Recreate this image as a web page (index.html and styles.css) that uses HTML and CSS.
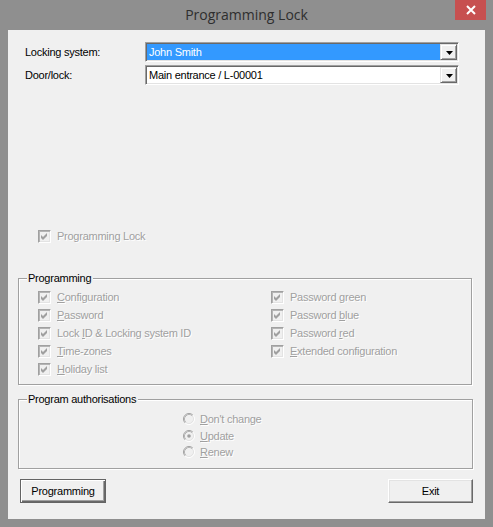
FILE: index.html
```html
<!DOCTYPE html>
<html>
<head>
<meta charset="utf-8">
<link rel="stylesheet" href="styles.css">
</head>
<body>
<div class="window">
  <div class="titlebar">
    <span class="title">Programming Lock</span>
    <div class="close"><svg width="10" height="10" viewBox="0 0 10 10"><path d="M1 1L9 9M9 1L1 9" stroke="#fff" stroke-width="2"/></svg></div>
  </div>
  <div class="client">
    <div class="formrow">
      <span class="lbl">Locking system:</span>
      <div class="combo">
        <div class="field sel">John Smith</div>
        <div class="drop"><svg width="7" height="4" viewBox="0 0 7 4"><path d="M0 0H7L3.5 4Z" fill="#000"/></svg></div>
      </div>
    </div>
    <div class="formrow">
      <span class="lbl">Door/lock:</span>
      <div class="combo">
        <div class="field">Main entrance / L-00001</div>
        <div class="drop"><svg width="7" height="4" viewBox="0 0 7 4"><path d="M0 0H7L3.5 4Z" fill="#000"/></svg></div>
      </div>
    </div>

    <div class="check solo">
      <span class="cb"><svg width="11" height="11" viewBox="0 0 11 11"><polygon points="2,4 4,6 8,2 8,5 4,9 2,7" fill="#a0a0a0"/></svg></span>
      <span class="dis">Programming Lock</span>
    </div>

    <fieldset class="group g1">
      <legend>Programming</legend>
      <div class="grid">
        <div class="check"><span class="cb"><svg width="11" height="11" viewBox="0 0 11 11"><polygon points="2,4 4,6 8,2 8,5 4,9 2,7" fill="#a0a0a0"/></svg></span><span class="dis"><u>C</u>onfiguration</span></div>
        <div class="check"><span class="cb"><svg width="11" height="11" viewBox="0 0 11 11"><polygon points="2,4 4,6 8,2 8,5 4,9 2,7" fill="#a0a0a0"/></svg></span><span class="dis">Password <u>g</u>reen</span></div>
        <div class="check"><span class="cb"><svg width="11" height="11" viewBox="0 0 11 11"><polygon points="2,4 4,6 8,2 8,5 4,9 2,7" fill="#a0a0a0"/></svg></span><span class="dis"><u>P</u>assword</span></div>
        <div class="check"><span class="cb"><svg width="11" height="11" viewBox="0 0 11 11"><polygon points="2,4 4,6 8,2 8,5 4,9 2,7" fill="#a0a0a0"/></svg></span><span class="dis">Password <u>b</u>lue</span></div>
        <div class="check"><span class="cb"><svg width="11" height="11" viewBox="0 0 11 11"><polygon points="2,4 4,6 8,2 8,5 4,9 2,7" fill="#a0a0a0"/></svg></span><span class="dis">Lock <u>I</u>D &amp; Locking system ID</span></div>
        <div class="check"><span class="cb"><svg width="11" height="11" viewBox="0 0 11 11"><polygon points="2,4 4,6 8,2 8,5 4,9 2,7" fill="#a0a0a0"/></svg></span><span class="dis">Password <u>r</u>ed</span></div>
        <div class="check"><span class="cb"><svg width="11" height="11" viewBox="0 0 11 11"><polygon points="2,4 4,6 8,2 8,5 4,9 2,7" fill="#a0a0a0"/></svg></span><span class="dis"><u>T</u>ime-zones</span></div>
        <div class="check"><span class="cb"><svg width="11" height="11" viewBox="0 0 11 11"><polygon points="2,4 4,6 8,2 8,5 4,9 2,7" fill="#a0a0a0"/></svg></span><span class="dis"><u>E</u>xtended configuration</span></div>
        <div class="check"><span class="cb"><svg width="11" height="11" viewBox="0 0 11 11"><polygon points="2,4 4,6 8,2 8,5 4,9 2,7" fill="#a0a0a0"/></svg></span><span class="dis"><u>H</u>oliday list</span></div>
      </div>
    </fieldset>

    <fieldset class="group g2">
      <legend>Program authorisations</legend>
      <div class="radios">
        <div class="radio"><svg class="rb" width="12" height="12" viewBox="0 0 12 12"><circle cx="6" cy="6" r="4.5" fill="#f0f0f0"/><path d="M2.11 9.89A5.5 5.5 0 0 1 9.89 2.11" stroke="#a0a0a0" fill="none"/><path d="M9.89 2.11A5.5 5.5 0 0 1 2.11 9.89" stroke="#fff" fill="none"/><path d="M2.82 9.18A4.5 4.5 0 0 1 9.18 2.82" stroke="#b4b4b4" fill="none"/><path d="M9.18 2.82A4.5 4.5 0 0 1 2.82 9.18" stroke="#e3e3e3" fill="none"/></svg><span class="dis"><u>D</u>on't change</span></div>
        <div class="radio"><svg class="rb" width="12" height="12" viewBox="0 0 12 12"><circle cx="6" cy="6" r="4.5" fill="#f0f0f0"/><path d="M2.11 9.89A5.5 5.5 0 0 1 9.89 2.11" stroke="#a0a0a0" fill="none"/><path d="M9.89 2.11A5.5 5.5 0 0 1 2.11 9.89" stroke="#fff" fill="none"/><path d="M2.82 9.18A4.5 4.5 0 0 1 9.18 2.82" stroke="#b4b4b4" fill="none"/><path d="M9.18 2.82A4.5 4.5 0 0 1 2.82 9.18" stroke="#e3e3e3" fill="none"/><circle cx="6" cy="6" r="1.8" fill="#a0a0a0"/></svg><span class="dis"><u>U</u>pdate</span></div>
        <div class="radio"><svg class="rb" width="12" height="12" viewBox="0 0 12 12"><circle cx="6" cy="6" r="4.5" fill="#f0f0f0"/><path d="M2.11 9.89A5.5 5.5 0 0 1 9.89 2.11" stroke="#a0a0a0" fill="none"/><path d="M9.89 2.11A5.5 5.5 0 0 1 2.11 9.89" stroke="#fff" fill="none"/><path d="M2.82 9.18A4.5 4.5 0 0 1 9.18 2.82" stroke="#b4b4b4" fill="none"/><path d="M9.18 2.82A4.5 4.5 0 0 1 2.82 9.18" stroke="#e3e3e3" fill="none"/></svg><span class="dis"><u>R</u>enew</span></div>
      </div>
    </fieldset>

    <div class="buttons">
      <div class="btn default">Programming</div>
      <div class="btn">Exit</div>
    </div>
  </div>
</div>
</body>
</html>
```
FILE: styles.css
```css
html, body {
  margin: 0;
  padding: 0;
}
body {
  width: 493px;
  height: 527px;
  overflow: hidden;
}
.window {
  box-sizing: border-box;
  width: 493px;
  height: 527px;
  background: #8f8f8f;
  padding: 0 8px 8px 8px;
  display: flex;
  flex-direction: column;
  position: relative;
}
.titlebar {
  height: 30px;
  flex: none;
  display: flex;
  align-items: center;
  justify-content: center;
}
.title {
  font-family: "Open Sans", "Noto Sans", sans-serif;
  font-size: 14px;
  color: #2e2e2e;
  margin-top: -1px;
}
.close {
  position: absolute;
  top: 0;
  right: 7px;
  width: 31px;
  height: 20px;
  background: #c75050;
  display: flex;
  align-items: center;
  justify-content: center;
}
.client {
  flex: 1;
  background: #f0f0f0;
  padding: 12px 12px 0 10px;
  font-family: "Liberation Sans", Arial, sans-serif;
  font-size: 11px;
  letter-spacing: -0.25px;
  color: #000;
  display: flex;
  flex-direction: column;
}
.formrow {
  display: flex;
  height: 20px;
  margin-left: 7px;
  margin-bottom: 3px;
}
.lbl {
  width: 120px;
  line-height: 20px;
}
.combo {
  box-sizing: border-box;
  width: 314px;
  height: 20px;
  border: 1px solid;
  border-color: #a0a0a0 #fff #fff #a0a0a0;
  box-shadow: inset 1px 1px 0 #696969, inset -1px -1px 0 #e3e3e3;
  padding: 1px;
  display: flex;
  background: #fff;
}
.field {
  flex: 1;
  line-height: 16px;
  padding-left: 2px;
  background: #fff;
}
.field.sel {
  background: #3399ff;
  color: #fff;
}
.drop {
  box-sizing: border-box;
  width: 17px;
  height: 16px;
  background: #f0f0f0;
  border: 1px solid;
  border-color: #e3e3e3 #696969 #696969 #e3e3e3;
  box-shadow: inset 1px 1px 0 #fff, inset -1px -1px 0 #a0a0a0;
  display: flex;
  align-items: center;
  justify-content: center;
}
.drop svg {
  margin-top: 1px;
  margin-left: 1px;
}
.check {
  display: flex;
  align-items: center;
  height: 18px;
}
.check.solo {
  margin-top: 140px;
  margin-left: 20px;
  height: 16px;
  margin-bottom: 1px;
}
.cb {
  box-sizing: border-box;
  width: 13px;
  height: 13px;
  flex: none;
  border: 1px solid;
  border-color: #a0a0a0 #fff #fff #a0a0a0;
  box-shadow: inset 1px 1px 0 #b4b4b4, inset -1px -1px 0 #e3e3e3;
  background: #f0f0f0;
  margin-right: 6px;
  display: block;
}
.cb svg {
  display: block;
}
.dis {
  color: #a0a0a0;
  text-shadow: 1px 1px 0 #fff;
  white-space: nowrap;
}
.group {
  margin: 0;
  padding: 0;
  border: 1px solid #a0a0a0;
  box-shadow: 1px 1px 0 #fff, inset 1px 1px 0 #fff;
  min-width: 0;
}
.group legend {
  margin-left: 8px;
  padding: 0 2px 0 1px;
  line-height: 13px;
  background: #f0f0f0;
}
.g1 {
  margin-top: 27px;
  width: 454px;
  box-sizing: border-box;
}
.grid {
  display: grid;
  grid-template-columns: 233px 1fr;
  padding: 3px 0 6px 19px;
}
.g2 {
  margin-top: 8px;
  width: 455px;
  box-sizing: border-box;
}
.radios {
  display: flex;
  flex-direction: column;
  padding: 4px 0 7px 164px;
}
.radio {
  display: flex;
  align-items: center;
  height: 17px;
}
.radio:last-child {
  height: 16px;
  margin-bottom: 1px;
}
.rb {
  margin-right: 5px;
  flex: none;
}
.buttons {
  display: flex;
  justify-content: space-between;
  margin-top: 10px;
  padding-left: 2px;
  width: 455px;
  box-sizing: border-box;
}
.btn {
  box-sizing: border-box;
  width: 85px;
  height: 24px;
  border: 1px solid;
  border-color: #fff #696969 #696969 #fff;
  box-shadow: inset -1px -1px 0 #a0a0a0, inset 1px 1px 0 #e3e3e3;
  display: flex;
  align-items: center;
  justify-content: center;
  background: #f0f0f0;
}
.btn.default {
  width: 86px;
  border-color: #646464;
  box-shadow: inset 1px 1px 0 #fff, inset -1px -1px 0 #696969, inset -2px -2px 0 #a0a0a0;
}
```
